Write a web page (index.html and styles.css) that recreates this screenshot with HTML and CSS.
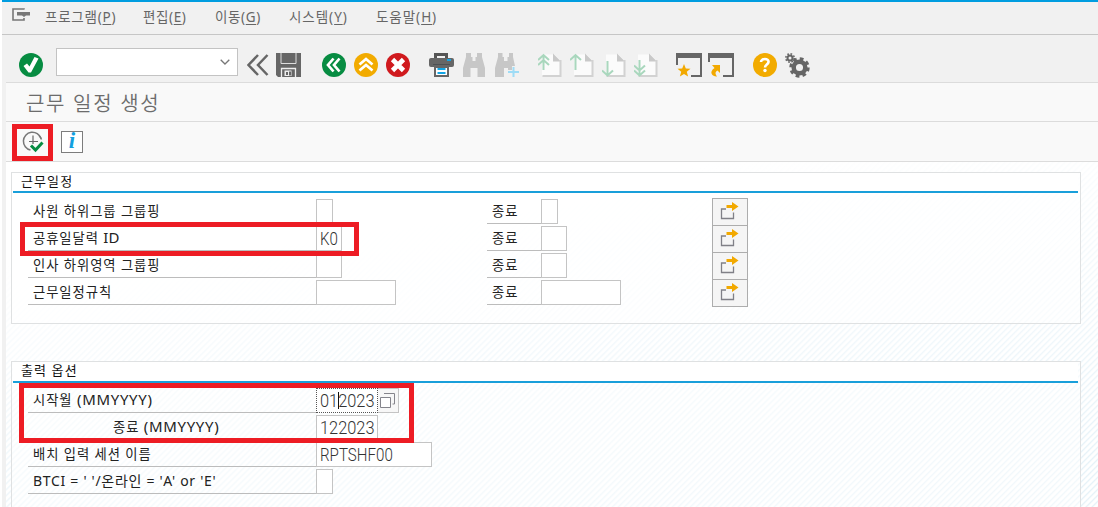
FILE: index.html
```
<!DOCTYPE html>
<html lang="ko">
<head>
<meta charset="utf-8">
<title>근무 일정 생성</title>
<link rel="stylesheet" href="styles.css">
</head>
<body>
<svg width="0" height="0" class="defs">
  <defs>
    <g id="page"><path d="M4 1.500h12.500l6 6v15.500H4z" fill="#fbfbfb"/><path d="M15 0.500l8 8h-8z" fill="#c9c9c9"/><path d="M22.500 7v16H4.500" fill="none" stroke="#d2d2d2" stroke-width="2"/></g>
    <g id="binoc"><path d="M4 0h5v4h1.500v4h3V4H15V0h5v4l3 11v9h-7.500v-9h-7v9H1v-9L4 4z"/></g>
    <symbol id="jump" viewBox="0 0 20 20"><path d="M7 8H2.500v9.500h12V11.500" fill="none" stroke="#808087" stroke-width="1.300"/><path d="M7.500 4H13V1l6.500 4.500L13 10V7H7.500z" fill="#f2a900"/></symbol>
  </defs>
</svg>
<div class="window">
  <nav class="menu">
    <svg class="menu-icon" width="18" height="13" viewBox="0 0 18 13"><path d="M12 1.500V1H1v11h11V10" fill="none" stroke="#777" stroke-width="1.600"/><path d="M5 4h13v3.500h-4L12 9l-2-1.500H5z" fill="#777"/></svg>
    <span class="m1">프로그램(<u>P</u>)</span><span class="m2">편집(<u>E</u>)</span><span class="m3">이동(<u>G</u>)</span><span class="m4">시스템(<u>Y</u>)</span><span class="m5">도움말(<u>H</u>)</span>
  </nav>
  <div class="main">
    <div class="toolbar">
      <svg class="enter" width="24" height="24" viewBox="0 0 24 24"><circle cx="12" cy="12" r="12" fill="#078c42"/><path d="M4.500 13l3.500-2.500 2.500 3L15.500 4l4 1.500-7.500 14h-2.500z" fill="#fff"/></svg>
      <div class="command"><svg width="10" height="6" viewBox="0 0 10 6"><path d="M.7.700 5 5 9.300.700" fill="none" stroke="#777" stroke-width="1.300"/></svg></div>
      <svg class="collapse" width="22" height="24" viewBox="0 0 22 24"><path d="M11 2 1.500 12 11 22M20.500 2 11 12l9.500 10" fill="none" stroke="#666" stroke-width="2.500"/></svg>
      <svg class="save" width="25" height="24" viewBox="0 0 25 24"><path d="M0 0h25v24H2l-2-2z" fill="#666"/><path d="M5 0v10.500h15V0" fill="none" stroke="#ddd"/><path d="M5.500 24v-8.500h14V24" fill="none" stroke="#eee" stroke-width="1.300"/><path d="M8.500 17.500h7v5.500h-7z" fill="#eee"/><path d="M10 19h2v3h-2zM13 18.500h2v4h-2z" fill="#666"/></svg>
      <svg class="back" width="24" height="24" viewBox="0 0 24 24"><circle cx="12" cy="12" r="12" fill="#078c42"/><path d="M11.500 5.500 6 12l5.500 6.500M17.500 5.500 12 12l5.500 6.500" fill="none" stroke="#fff" stroke-width="2.700"/></svg>
      <svg class="gap8" width="24" height="24" viewBox="0 0 24 24"><circle cx="12" cy="12" r="12" fill="#f2ab00"/><path d="M5.500 11.500 12 6l6.500 5.500M5.500 17.500 12 12l6.500 5.500" fill="none" stroke="#fff" stroke-width="2.700"/></svg>
      <svg class="gap8" width="24" height="24" viewBox="0 0 24 24"><circle cx="12" cy="12" r="12" fill="#d01a1e"/><path d="m6.500 6.500 11 11m0-11-11 11" stroke="#fff" stroke-width="4.700"/></svg>
      <svg class="print" width="25" height="24" viewBox="0 0 25 24"><path d="M5 5V0h14v5h-3V3H8v2z" fill="#555"/><rect y="5" width="25" height="9" rx="2" fill="#666"/><path d="M4 11.500h17" stroke="#4d5154"/><path d="M18 7h4" stroke="#13a5e5" stroke-width="2"/><path d="M6 14h13v9H6z" fill="#fff" stroke="#666" stroke-width="2"/><path d="M8.500 16h8M8.500 20h8" stroke="#13a5e5" stroke-width="2"/></svg>
      <svg class="gap8" width="24" height="24" viewBox="0 0 24 24" fill="#c7c7c7"><use href="#binoc"/></svg>
      <svg class="gap8" width="25" height="24" viewBox="0 0 25 24"><path d="M4 0h4.500v4H10v4h3.500V4H15V0h4v4l2 9h-3v4h-4v-2h-4v9H1v-9L4 4z" fill="#c7c7c7"/><path d="M19.500 14v10M14 19h11" stroke="#9edcf6" stroke-width="2"/></svg>
      <svg class="pages" width="24" height="24" viewBox="0 0 24 24"><use href="#page"/><path d="M5.500 17V2M0 7l5.500-5L11 7M0 12l5.500-5 5.500 5" fill="none" stroke="#a9d7bd" stroke-width="2"/></svg>
      <svg class="gap8" width="24" height="24" viewBox="0 0 24 24"><use href="#page"/><path d="M5.500 17V2M0 7l5.500-5L11 7" fill="none" stroke="#a9d7bd" stroke-width="2"/></svg>
      <svg class="gap8" width="24" height="24" viewBox="0 0 24 24"><use href="#page"/><path d="M5.500 8v14M0 17.500l5.500 5 5.500-5" fill="none" stroke="#a9d7bd" stroke-width="2"/></svg>
      <svg class="gap8" width="24" height="24" viewBox="0 0 24 24"><use href="#page"/><path d="M5.500 7v15M0 12.500l5.500 5 5.500-5M0 17.500l5.500 5 5.500-5" fill="none" stroke="#a9d7bd" stroke-width="2"/></svg>
      <svg class="session" width="26" height="24" viewBox="0 0 26 24"><path d="M0 0h26v5H0z" fill="#666"/><path d="M1 4v8M25 4v19H15" fill="none" stroke="#666" stroke-width="2"/><path d="m8 11 1.800 4.500 4.700.3-3.700 3 1.300 4.700L8 21l-4.100 2.500 1.300-4.700-3.700-3 4.700-.3z" fill="#f2a900"/></svg>
      <svg class="shortcut" width="26" height="24" viewBox="0 0 26 24"><path d="M0 0h26v5H0z" fill="#666"/><path d="M1 4v5M25 4v19H15" fill="none" stroke="#666" stroke-width="2"/><path d="M4 12h8v8l-2.500-2.500c-2.500 1.500-2.500 3-.5 6-4 .5-9-4-2.500-8.500z" fill="#f2a900"/></svg>
      <svg class="help" width="24" height="24" viewBox="0 0 24 24"><circle cx="12" cy="12" r="12" fill="#f2ab00"/><path d="M8 9C8 5 16 5 15.500 9c-.3 2.500-3.500 2.500-3.500 5.500" fill="none" stroke="#fff" stroke-width="2.600"/><circle cx="12" cy="17.500" r="1.700" fill="#fff"/></svg>
      <svg class="gears" width="25" height="25" viewBox="0 0 25 25"><g fill="none" stroke="#666"><circle cx="14.500" cy="14.500" r="5.800" stroke-width="4.500"/><circle cx="14.500" cy="14.500" r="8.700" stroke-width="3" stroke-dasharray="3.700 3.133"/><circle cx="5" cy="5" r="2.500" stroke-width="2"/><circle cx="5" cy="5" r="4.200" stroke-width="1.600" stroke-dasharray="1.700 1.600"/></g></svg>
    </div>
    <h1 class="title">근무 일정 생성</h1>
    <div class="actions">
      <svg width="22" height="22" viewBox="0 0 22 22"><path d="M8.500 19A9 9 0 1 1 19 7.500" fill="none" stroke="#777" stroke-width="1.500"/><path d="M17 4.500a9 9 0 0 1 2.500 4" fill="none" stroke="#777" stroke-width="1.500"/><path d="M11 4.500v8.500M7 10.500h9" stroke="#666" stroke-width="1.200"/><path d="m9 14.500 4.500 4.500 7-7.500" fill="none" stroke="#078c42" stroke-width="3"/></svg>
      <div class="info">i</div>
    </div>
    <div class="content">
      <section class="panel panel-a">
        <h2>근무일정</h2>
        <div class="rows">
          <div class="row"><label>사원 하위그룹 그룹핑</label><i class="field w1"></i><label class="to">종료</label><i class="field w1"></i><button><svg width="20" height="20"><use href="#jump"/></svg></button></div>
          <div class="row"><label>공휴일달력 <span class="id">ID</span></label><i class="field w2"><b>K0</b></i><label class="to">종료</label><i class="field w2"></i><button><svg width="20" height="20"><use href="#jump"/></svg></button></div>
          <div class="row"><label>인사 하위영역 그룹핑</label><i class="field w2"></i><label class="to">종료</label><i class="field w2"></i><button><svg width="20" height="20"><use href="#jump"/></svg></button></div>
          <div class="row"><label>근무일정규칙</label><i class="field w8"></i><label class="to">종료</label><i class="field w8"></i><button><svg width="20" height="20"><use href="#jump"/></svg></button></div>
        </div>
      </section>
      <section class="panel panel-b">
        <h2>출력 옵션</h2>
        <div class="rows">
          <div class="row"><label>시작월 <span class="latin">(MMYYYY)</span></label><i class="field w6 focus"><b class="digits">012023</b><span class="caret"></span></i><span class="picker"><svg width="17" height="17" viewBox="0 0 17 17"><path d="M1.500 5.500h10v10h-10z" fill="#fff" stroke="#85858c"/><path d="M5 1.500h10.500v10.500h-2" fill="none" stroke="#85858c"/></svg></span></div>
          <div class="row"><label class="indent">종료 <span class="latin">(MMYYYY)</span></label><i class="field w6"><b class="digits">122023</b></i></div>
          <div class="row"><label>배치 입력 세션 이름</label><i class="field w12"><b>RPTSHF00</b></i></div>
          <div class="row"><label class="btci">BTCI = ' '/온라인 = 'A' or 'E'</label><i class="field w1"></i></div>
        </div>
      </section>
    </div>
  </div>
  <div class="mark mark-run"></div>
  <div class="mark mark-calendar"></div>
  <div class="mark mark-period"></div>
</div>
</body>
</html>
```

FILE: styles.css
```
* { box-sizing: border-box; }
body { margin: 0; background: #fff; font-family: "Noto Sans", "Noto Sans CJK KR", sans-serif; overflow: hidden; }
.defs { position: absolute; }
svg { display: block; flex: none; }
.window { position: relative; margin-left: 2px; width: 1096px; height: 507px; background: #f1f1f1; border-top: 2px solid #009de0; overflow: hidden; }
.menu { display: flex; height: 33px; border-bottom: 1px solid #c6c6c6; padding-left: 10px; font-size: 13.5px; line-height: 20px; color: #666; white-space: nowrap; }
.menu span { padding-top: 5px; flex: none; letter-spacing: .6px; }
.menu u { text-underline-offset: 2px; text-decoration-thickness: 1px; }
.menu-icon { margin-top: 6px; }
.menu .m1 { margin-left: 15px; width: 98px; letter-spacing: .75px; }
.m2 { width: 72px; }
.m3 { width: 74px; }
.m4 { width: 87px; }
.menu .m4, .menu .m5 { letter-spacing: .95px; }
.main { padding-left: 4px; }
.toolbar { display: flex; height: 48px; padding: 18px 0 0 12px; border-bottom: 1px solid #dcdcdc; }
.command { width: 182px; height: 28px; margin: -5px 0 0 13px; background: #fff; border: 1px solid #c3c3c3; display: flex; justify-content: flex-end; align-items: center; padding-right: 7px; }
.toolbar .enter { margin-left: 1px; }
.toolbar .collapse { margin-left: 9px; }
.toolbar .save { margin-left: 7px; }
.toolbar .back { margin-left: 21px; }
.toolbar .gap8 { margin-left: 8px; }
.toolbar .print { margin-left: 19px; }
.toolbar .pages { margin-left: 19px; }
.toolbar .session { margin-left: 18px; }
.toolbar .shortcut { margin-left: 6px; }
.toolbar .help { margin-left: 19px; }
.toolbar .gears { margin-left: 8px; }
.title { margin: 0; height: 39px; padding: 6px 0 0 20px; border-bottom: 1px solid #dcdcdc; background: #f9f9f9; font-size: 20px; font-weight: 350; line-height: 29px; color: #6c6c6c; letter-spacing: 1.7px; }
.actions { display: flex; height: 40px; padding: 9px 0 0 16px; border-bottom: 1px solid #dcdcdc; background: #f9f9f9; }
.info { width: 22px; height: 22px; margin: 0 0 0 17px; border: 1px solid #7d7d7d; background: #fff; color: #13a0df; font: italic bold 23px/18px "Liberation Serif", serif; text-align: center; }
.content { height: 345px; padding: 10px 17px 0 5px; background: linear-gradient(172deg, #fff 20%, rgba(255,255,255,.5) 55%, rgba(255,255,255,.1) 90%), repeating-linear-gradient(135deg, #fff 0 1.500px, #e4f1f8 2.800px, #fff 4.240px); }
.panel { border: 1px solid #dfe1e2; background: rgba(255,255,255,.45); }
.panel-a { height: 152px; background: rgba(255,255,255,.6); }
.panel-b { height: 180px; margin-top: 37px; }
.panel h2 { height: 20px; margin: 0 2px 0 1px; padding-left: 8px; background: #fff; border-bottom: 2px solid #199fda; font-size: 13px; font-weight: 400; line-height: 17px; letter-spacing: 1.1px; color: #111; }
.panel-b h2 { height: 21px; }
.rows { padding: 4px 0 0 16px; }
.panel-b .rows { padding-top: 3px; }
.row { display: flex; height: 27px; align-items: flex-end; }
.row label { width: 289px; height: 24px; padding-left: 5px; border-bottom: 1px solid #bcbcbc; font-size: 13.300px; line-height: 22px; letter-spacing: .95px; color: #222; white-space: pre; flex: none; }
.row label.to { width: 54px; padding-left: 5px; letter-spacing: 1px; }
.row label.indent { padding-left: 85px; }
.row .latin { letter-spacing: .68px; font-size: 15px; line-height: 20px; }
.row .id { font-size: 15px; letter-spacing: 0; line-height: 20px; }
.row label.btci { letter-spacing: .7px; font-size: 14px; }
.panel-a .row { display: grid; grid-template-columns: 289px 170px 55px 170px 36px; }
.field { height: 25px; margin-left: -1px; border: 1px solid #c4c4c4; background: #fff; flex: none; font-style: normal; position: relative; padding-left: 3px; }
.field b { display: block; font: 300 18px/23px Roboto, sans-serif; color: #333; transform: scaleX(.84); transform-origin: 0 0; white-space: nowrap; }
.field b.digits { transform: scaleX(.91); }
.w1 { width: 17px; }
.w2 { width: 26px; }
.w6 { width: 62px; }
.w8 { width: 80px; }
.w12 { width: 116px; }
.focus { border: 1px dotted #555; }
.caret { position: absolute; left: 21px; top: 3px; width: 1px; height: 17px; background: #111; }
.picker { width: 21px; height: 25px; padding: 3px 0 0 1px; border: solid #c4c4c4; border-width: 1px 1px 1px 0; background: #f7f7f7; }
.row button { width: 36px; height: 28px; margin: 0 0 -2px; padding: 0 0 3px 6px; border: 1px solid #adadad; background: #f5f5f5; display: block; }
.mark { position: absolute; border: 5px solid #ed1c24; }
.mark-run { left: 10px; top: 122px; width: 41px; height: 37px; }
.mark-calendar { left: 18px; top: 220px; width: 339px; height: 34px; }
.mark-period { left: 17px; top: 381px; width: 395px; height: 60px; }
```
